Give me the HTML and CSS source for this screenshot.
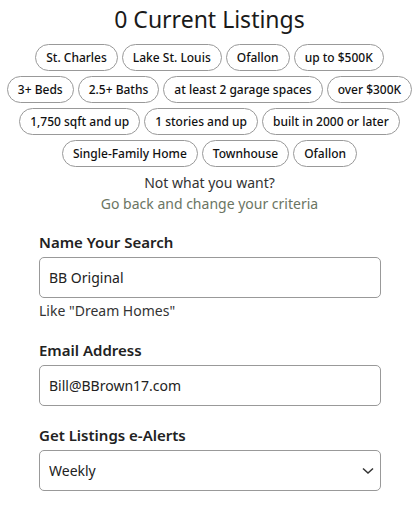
FILE: index.html
```html
<!DOCTYPE html>
<html>
<head>
    <title>Save Search</title>
    <link rel="stylesheet" href="styles.css">
</head>
<body>
    <div class="search-container">
        <h1 class="count">0 Current Listings</h1>

        <div class="criteria">
            <span class="chip">St. Charles</span>
            <span class="chip">Lake St. Louis</span>
            <span class="chip">Ofallon</span>
            <span class="chip">up to $500K</span>
            <span class="chip">3+ Beds</span>
            <span class="chip">2.5+ Baths</span>
            <span class="chip">at least 2 garage spaces</span>
            <span class="chip">over $300K</span>
            <span class="chip">1,750 sqft and up</span>
            <span class="chip">1 stories and up</span>
            <span class="chip">built in 2000 or later</span>
            <span class="chip">Single-Family Home</span>
            <span class="chip">Townhouse</span>
            <span class="chip">Ofallon</span>
        </div>

        <p class="not-want">Not what you want?</p>
        <a class="go-back" href="#">Go back and change your criteria</a>

        <form class="save-form">
            <div class="field">
                <label for="search-name">Name Your Search</label>
                <input id="search-name" type="text" value="BB Original">
                <div class="hint">Like "Dream Homes"</div>
            </div>
            <div class="field">
                <label for="email">Email Address</label>
                <input id="email" type="email" value="Bill@BBrown17.com">
            </div>
            <div class="field">
                <label for="alerts">Get Listings e-Alerts</label>
                <div class="select-wrap">
                    <select id="alerts">
                        <option>Weekly</option>
                        <option>Daily</option>
                        <option>Never</option>
                    </select>
                    <svg class="chevron" width="12" height="8" viewBox="0 0 12 8">
                        <path d="M1 1.5 L6 6 L11 1.5" fill="none" stroke="#333" stroke-width="1.5"/>
                    </svg>
                </div>
            </div>
        </form>
    </div>
</body>
</html>
```

FILE: styles.css
```css
body {
    font-family: "Noto Sans", "Open Sans", sans-serif;
    margin: 0;
    background-color: white;
    color: #222;
}
.search-container {
    padding-top: 4px;
    text-align: center;
}
.count {
    font-size: 23px;
    font-weight: normal;
    margin: 0 0 10px;
    line-height: 30px;
    color: #1a1a1a;
}
.criteria {
    display: flex;
    flex-wrap: wrap;
    justify-content: center;
    gap: 5px 4px;
}
.chip {
    display: inline-block;
    border: 1px solid #999;
    border-radius: 14px;
    padding: 0 10px;
    height: 25px;
    line-height: 25px;
    font-size: 12px;
    font-weight: 500;
    color: #111;
}
.not-want {
    margin: 6px 0 0;
    font-size: 14px;
    line-height: 20px;
    color: #333;
}
.go-back {
    display: block;
    margin-top: 1px;
    font-size: 14px;
    line-height: 20px;
    color: #6b7563;
    text-decoration: none;
}
.save-form {
    text-align: left;
    margin: 18px 38px 0 39px;
}
.field {
    margin-bottom: 19px;
}
.field label {
    display: block;
    font-size: 15px;
    line-height: 20px;
    font-weight: 600;
    color: #222;
    margin-bottom: 5px;
}
.field input,
.field select {
    display: block;
    box-sizing: border-box;
    width: 100%;
    height: 41px;
    border: 1px solid #999;
    border-radius: 5px;
    padding: 0 9px;
    font-family: inherit;
    font-size: 14px;
    color: #222;
    background: white;
}
.hint {
    margin-top: 3px;
    font-size: 14px;
    line-height: 20px;
    color: #333;
}
.select-wrap {
    position: relative;
}
.field select {
    appearance: none;
}
.chevron {
    position: absolute;
    right: 7px;
    top: 17px;
    pointer-events: none;
}
```
